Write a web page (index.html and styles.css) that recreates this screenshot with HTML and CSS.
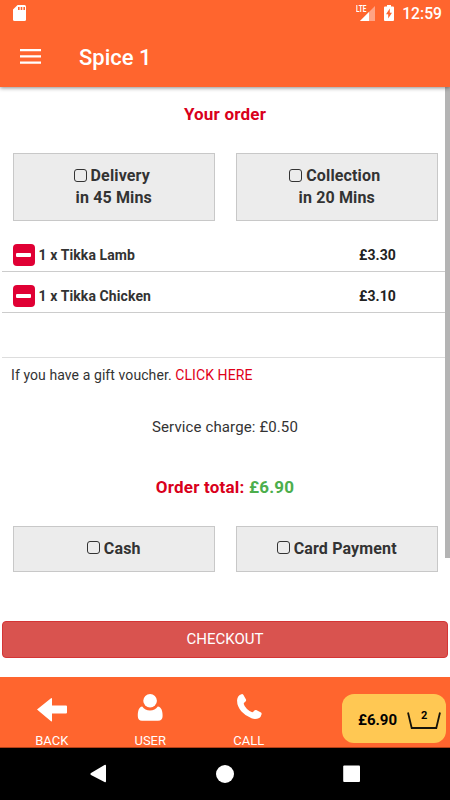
FILE: index.html
```html
<!DOCTYPE html>
<html lang="en">
<head>
<meta charset="utf-8">
<title>Spice 1</title>
<link rel="stylesheet" href="styles.css">
</head>
<body>
<div class="screen">
  <header class="header">
    <div class="status">
      <svg class="sd" width="13" height="16" viewBox="0 0 13 16"><path fill="#fff" d="M4.6 0H11.5Q13 0 13 1.5V14.5Q13 16 11.5 16H1.5Q0 16 0 14.5V4.6Z"/><path fill="#ff652e" d="M5 2h1.6v3H5zM7.7 2h1.6v3H7.700zM10.400 2H12v3h-1.600z"/></svg>
      <div class="status-right">
        <div class="signal"><svg width="15" height="15" viewBox="0 0 15 15"><path fill="#ffa385" d="M15 0V15H0Z"/><path fill="#fff" d="M9 6V15H0Z"/></svg><span class="lte">LTE</span></div>
        <svg class="battery" width="10" height="16" viewBox="0 0 10 16"><path fill="#fff" d="M3 0H7V1.500H9Q10 1.500 10 2.500V15Q10 16 9 16H1Q0 16 0 15V2.500Q0 1.500 1 1.500H3Z"/><path fill="#ff652e" d="M5.800 3.500V7.700H8L4.200 13.500V9.300H2Z"/></svg>
        <span class="time">12:59</span>
      </div>
    </div>
    <div class="toolbar">
      <svg class="menu" width="21" height="15" viewBox="0 0 21 15"><path fill="#fff" d="M0 0h21v2.200H0zM0 6.300h21v2.200H0zM0 12.600h21v2.200H0z"/></svg>
      <h1 class="title">Spice 1</h1>
    </div>
  </header>
  <main class="main">
    <h2 class="heading">Your order</h2>
    <div class="options">
      <div class="option timed"><div><span class="check"></span><span>Delivery</span></div><div>in 45 Mins</div></div>
      <div class="option timed"><div><span class="check"></span><span>Collection</span></div><div>in 20 Mins</div></div>
    </div>
    <div class="items">
      <div class="item"><span class="minus"></span><span class="name">1 x Tikka Lamb</span><span class="price">£3.30</span></div>
      <div class="item"><span class="minus"></span><span class="name">1 x Tikka Chicken</span><span class="price">£3.10</span></div>
      <div class="blank"></div>
    </div>
    <p class="voucher">If you have a gift voucher. <a>CLICK HERE</a></p>
    <p class="service">Service charge: £0.50</p>
    <p class="total">Order total: <span>£6.90</span></p>
    <div class="options payment">
      <div class="option"><div><span class="check"></span><span>Cash</span></div></div>
      <div class="option"><div><span class="check"></span><span>Card Payment</span></div></div>
    </div>
    <div class="checkout">CHECKOUT</div>
    <div class="scrollbar"></div>
  </main>
  <footer class="footer">
    <div class="tab"><svg width="32" height="30" viewBox="0 0 32 30"><path fill="#fff" d="M1 15.500 15 4.200Q16 3.600 16 5V11.500H30Q31 11.500 31 12.500V18.500Q31 19.500 30 19.500H16V26.500Q16 28 15 27.200Z"/></svg><span>BACK</span></div>
    <div class="tab"><svg width="32" height="30" viewBox="0 0 32 30"><path fill="#fff" d="M8.200 12.600Q11 16.600 16 16.600T23.800 12.600C27.500 13.200 28.600 17 28.600 22Q28.600 26.800 24 26.800H8Q3.800 26.800 3.800 22C3.800 17 4.800 13.200 8.200 12.600Z"/><circle cx="16.100" cy="7.200" r="7.400" fill="#ff652e"/><circle cx="16.100" cy="6.800" r="6.800" fill="#fff"/></svg><span>USER</span></div>
    <div class="tab"><svg width="32" height="30" viewBox="0 0 32 30"><path fill="#fff" d="M8.500 .2Q9.600 -.2 10.300 .8L13 5.600Q13.400 6.600 12.500 7.400Q10.500 9 10.700 9.800Q11.300 12.500 14 15T19.200 18.300Q20 18.500 21.400 16.600Q22.200 15.700 23.200 16.100L28 18.500Q28.800 19 28.600 20.200Q27.900 23 26.200 23.900Q22.500 25.800 18.500 24.300Q12.500 22 8.500 17.500Q3.800 12 4.100 6Q4.500 1.500 8.500 .2Z"/></svg><span>CALL</span></div>
    <div class="basket"><span class="sum">£6.90</span><div class="cart"><svg width="34" height="18" viewBox="0 0 34 18"><path d="M1 .5 4.700 16H29.300L33 .5" fill="none" stroke="#17140a" stroke-width="1.800"/></svg><span class="count">2</span></div></div>
  </footer>
  <nav class="nav">
    <svg width="450" height="52" viewBox="0 0 450 52"><g fill="#fff"><path d="M91 25 104.500 17Q106 16.200 106 18V33Q106 35 104.500 34L91 27Q89.500 26 91 25Z"/><circle cx="225" cy="26" r="9"/><rect x="343.200" y="17.500" width="16.800" height="16.500" rx="1"/></g></svg>
  </nav>
</div>
</body>
</html>
```
FILE: styles.css
```css
* { box-sizing: border-box; }
body { margin: 0; font-family: Roboto, sans-serif; color: #333; }
h1, h2, p { margin: 0; }
svg { display: block; flex: none; }
.screen { width: 450px; height: 800px; display: flex; flex-direction: column; overflow: hidden; background: #fff; }
.header { height: 87px; flex: none; background: #ff652e; color: #fff; box-shadow: 0 1px 4px rgba(0,0,0,.45); position: relative; z-index: 1; }
.status { height: 28px; display: flex; justify-content: space-between; align-items: center; padding: 0 8px 0 13px; }
.sd { margin-top: -2px; }
.status-right { display: flex; align-items: center; }
.signal { position: relative; width: 15px; height: 15px; margin: -2px 9px 0 0; }
.lte { position: absolute; left: -4px; top: -1px; font-size: 9px; line-height: 9px; font-weight: 700; transform: scaleX(.72); transform-origin: 0 0; }
.battery { margin: -2px 8px 0 0; }
.time { font-size: 15.700px; line-height: 28px; font-weight: 500; }
.toolbar { height: 59px; display: flex; align-items: center; padding-left: 20px; }
.menu { margin-right: 38px; margin-top: -2px; }
.title { font-size: 22px; line-height: 26px; font-weight: 500; padding-top: 1px; }
.main { height: 590px; flex: none; position: relative; }
.heading { text-align: center; color: #d9001b; font-size: 17px; line-height: 20px; letter-spacing: .2px; font-weight: 700; padding-top: 17px; }
.options { display: grid; grid-template-columns: 201.500px 201.500px; column-gap: 21.500px; margin: 29px 12px 0 13px; }
.option { height: 68px; border: 1px solid #c8c8c8; background: #ececec; display: flex; flex-direction: column; justify-content: center; align-items: center; font-size: 16px; line-height: 22px; letter-spacing: .15px; font-weight: 700; }
.option > div { display: flex; align-items: center; }
.timed > div:first-child { padding-right: 4px; }
.check { width: 13px; height: 13px; border: 1px solid #333; border-radius: 3px; margin-right: 4px; margin-top: -2px; }
.items { margin: 14px 2px 0; }
.item { height: 40.500px; border-bottom: 1px solid #ccc; display: flex; align-items: center; padding: 8px 0 0 11px; font-size: 14px; letter-spacing: .1px; font-weight: 700; color: #333; }
.item:first-child { height: 37px; padding-top: 4px; }
.minus { width: 21.500px; height: 22px; border-radius: 4px; background: #e00034; margin-right: 4px; display: flex; align-items: center; justify-content: center; }
.minus::after { content: ""; width: 15px; height: 4px; border-radius: 1px; background: #fff; }
.name { width: 320.500px; }
.price { color: #222; }
.blank { height: 45px; border-bottom: 1px solid #ddd; }
.voucher { font-size: 14px; line-height: 20px; letter-spacing: .085px; padding: 7px 0 0 11px; }
.voucher a { color: #e00018; }
.service { font-size: 15px; line-height: 20px; letter-spacing: .12px; text-align: center; margin-top: 32px; }
.total { font-size: 17px; line-height: 20px; letter-spacing: .2px; text-align: center; font-weight: 700; color: #d9001b; margin-top: 40px; }
.total span { color: #4cae4c; }
.payment { margin-top: 29px; }
.payment .option { height: 46px; }
.checkout { margin: 49px 2px 0; height: 37px; border: 1px solid #d43535; border-radius: 4px; background: #d9534f; color: #fff; font-size: 15px; line-height: 34px; text-align: center; }
.scrollbar { position: absolute; right: 0; top: 0; width: 5px; height: 471px; background: #b4b4b4; }
.footer { height: 71px; flex: none; background: #ff652e; color: #fff; display: flex; padding-left: 2.500px; border-bottom: 1px solid #b04018; }
.tab { width: 98.500px; flex: none; display: flex; flex-direction: column; align-items: center; padding-top: 17px; font-size: 13px; line-height: 16px; }
.tab svg { margin-bottom: 9px; }
.basket { width: 104px; height: 49px; margin: 16.500px 0 0 44px; border-radius: 12px; background: #ffc853; color: #000; display: flex; align-items: center; padding: 3px 0 0 16px; font-size: 15px; font-weight: 700; }
.cart { position: relative; margin-left: 10px; padding-top: 3px; }
.count { position: absolute; inset: 0 0 auto 0; text-align: center; font-size: 11px; line-height: 13px; font-weight: 700; }
.nav { height: 52px; flex: none; background: #000; }
```
